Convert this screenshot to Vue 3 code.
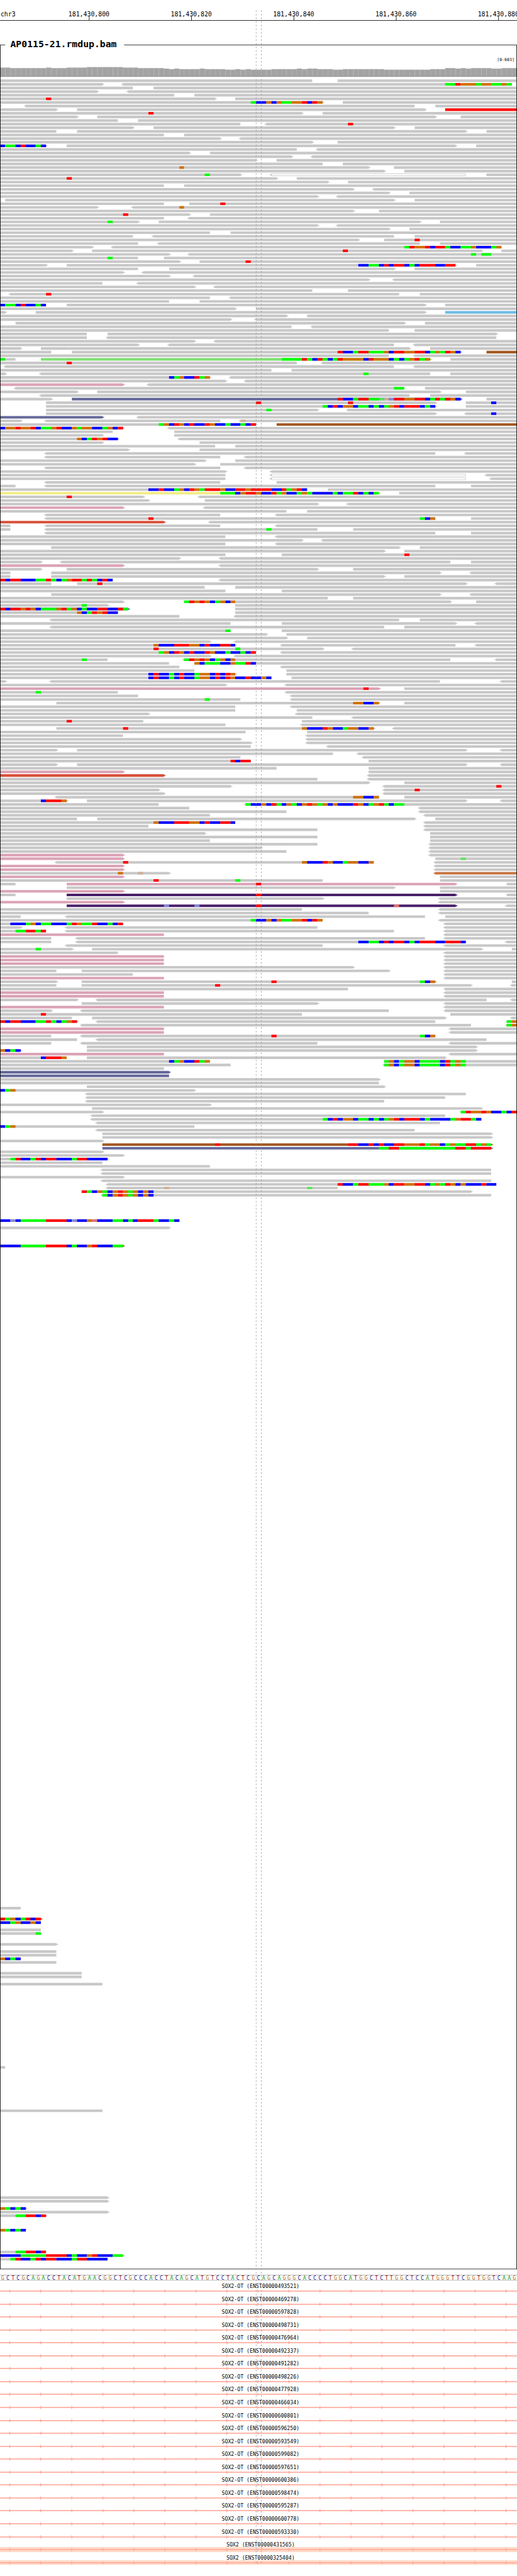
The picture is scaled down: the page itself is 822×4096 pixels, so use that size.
<script setup>
const BASES = 101
const ROW_PITCH = 7
const READ_TOP = 94

const sequence =
  'GCTCGCAGACCTACATGAACGGCTCGCCCACCTACAGCATGTCCTACTCGCAGCAGGGCACCCCTGGCATGGCTCTTGGCTCCATGGGTTCGGTGGTCAAG'

const genes = [
  '493521', '469278', '597828', '498731', '476964', '492337', '491282', '498226',
  '477928', '466034', '600801', '596250', '593549', '599082', '597651', '600386',
  '598474', '595287', '600778', '593330',
].map((id) => ({ label: `SOX2-OT (ENST00000${id})`, band: 0 }))
genes.push({ label: 'SOX2 (ENST00000431565)', band: 10 })
genes.push({ label: 'SOX2 (ENST00000325404)', band: 9 })

const ticks = [
  { base: 17, label: '181,430,800' },
  { base: 37, label: '181,430,820' },
  { base: 57, label: '181,430,840' },
  { base: 77, label: '181,430,860' },
  { base: 97, label: '181,430,880' },
]

// [first base, top of the bar] for each step of the coverage histogram
const coverage = [
  [0, 71], [2, 72], [9, 71], [10, 72], [13, 71], [17, 70], [24, 71], [27, 72], [32, 73],
  [33, 74], [34, 73], [35, 74], [39, 73], [40, 74], [44, 75], [46, 74], [47, 75], [48, 74],
  [49, 75], [53, 74], [58, 73], [59, 74], [60, 73], [62, 74], [65, 75], [67, 74], [75, 75],
  [84, 74], [87, 72], [89, 73], [90, 72], [91, 73], [92, 72], [96, 73], [98, 72],
]

const readColors = {
  '': '#c8c8c8',
  p: '#dba3b5',
  s: '#65689a',
  b: '#a45a24',
  l: '#80e073',
  k: '#6cbce6',
  y: '#f3ec87',
  m: '#d9503a',
  o: '#c87441',
  u: '#49206a',
  r: '#ff0000',
}

const baseColors = {
  A: '#00ff00', C: '#0000ff', G: '#d17105', T: '#ff0000',
  a: '#63e263', c: '#8a8ad8', g: '#cdb299', t: '#e07272',
}

const letterColors = { A: '#109618', C: '#14148c', G: '#b0701c', T: '#a50a0a' }

// One line per row: reads as "start-end" with < or > for the strand tip and an
// optional colour letter in front, then mismatches as "@position" plus bases.
// "#n" jumps to row n, "w" marks a hollow read.
const pileup = `
0-61 66-101
0-20> <24-100 @87AATGGGAGGAAGA
0-26 30-101
0-19> <25-101
0-34 38-101
0-42> 46-101 @9T
0-63> 67-101 @49ACCGCGAAGGTCTG
0-0> <5-81 85-101
0-11> 15-83> r87-101
0-59> 63-101 @29T
0-15> 19-85> 90-101
0-23 27-101
0-47 <52-101 @68T
0-26> 30-77> 81-101
0-11 15-91> 95-101
0-32 36-101
0-43> <47-101
0-61> 66-101
0-9> 13-89> 93-101 @0CAACTCCAC
0-58 <62-101
0-37> 41-101
0-57> <61-101
0-50> 54-101
0-63 67-101
0-72> 77-101 @35G
0-75> 79-101
0-47> w<53-91 95-101 @40A
0-54> 58-101 @13T
0-64> 68-101
0-32 36-101
0-69> <73-101
0-76> 80-101
0-62> <66-101
1-77> 81-101
0-32 37-101 @43T
0-19> <26-101 @35G
0-69> 74-101
0-37> 41-101 @24T
0-32 <37-101
0-27> 31-82> 86-101 @21A
0-62> <66-101
0-76> 80-101
0-41 45-101
0-26 <30-77 81-101
0-70> 75-101 @81T
0-27 <31-82 86-101
0-18> <22-98 @79ATGGTCTTACCAAGCCCAG
0-14> 18-94> 98-101 @67T
0-33> <37-101 @92A @94AA
0-27 32-101 @21A
0-35> 39-101 @48T
0-9> 13-89> 93-101 @70CCAACTCTTCACTTTCCTT
0-27 33-77> 81-101
0-24> <28-101
0-33> <38-101
0-72> <77-101
0-20 <27-101
0-38> <42-101
0-61 68-101
<2-78 82-101 @9T
0-41 <45-101
0-33 39-101
0-9 13-83> 87-101 @0CAACTCCAC
0-46> 50-101
0-1> 7-83> k87-101
0-56> 60-101
0-45> <50-101
3-79> 83-101
0-57 <61-101
0-76 81-101
0-17 21-97>
0-17 <21-97
0-38> <42-101
0-27> <33-77 <81-101
0-4> 8-80> 84-101
0-10 14-90> b95-101 @66TCCATTAAAGCTTGGTTCAGATGC
0-76 <81-101
0-3 l8-84> 88-101 @0A @55AAAATACTACATGGGGCTGGGCACAGTAG
0-58 <63-101 @13T
<1-77 <81-101
0-53 57-101
0-1> <8-84 88-101 @71A
0-41> <45-101 @33CAGCCTAG
0-44> <48-101
p0-24> <29-101
<3-79 83-101 @77AA
0-15> 19-86> 91-101
<8-80 84-101
0-10> s14-90> 95-101 @66TCCATTAAagcTTGGTTCATATGC
9-85> 91-101 @50T @68T @96C
9-85> 91-101 @63ACTCGGCAACACAGTCTTTCAC
9-62> <68-101 @52A
9-85> <91-101 @96C
s0-20> <27-101
0-4> <9-43 <47-101 @47g
0-50> b54-101 @31AGCTGCTCCTGCCACCACT
0-24> <33-101 @0CGGTGGTCAAGTCCGAGGCCAGCT
0-22 34-101
0-20> 34-101
0-23> <35-101 @15GCATGTCC
0-20> 39-101
0-42 46-101
0-25> 39-101
<9-85 <91-101
<9-43 <48-101
0-40> 46-101
0-38> 43-101
0-0> <9-43 <48-101
0-44> <53-101
0-44 w<53-91 <95-101
0-44 w<53-91 <96-101
<9-43 54-101
0-3 <9-85 92-101
0-60 64-101 @29CCTCCAGCTGATTTGCCTTGTTTTCCTAGTC
y0-74> 78-101 @43AAACGTTGCCTAGCCAGACCCCACAATCACA
0-28> <39-101 @13T
0-29> 40-101
0-62> <68-101
p0-24> <40-101
0-56 60-101
<9-43 <54-101
<9-85 92-101 @29T @82ACG
m0-32> <41-101
0-2 <9-43 <54-101
0-2 <9-62 69-101 @52A
<9-85 92-101
0-44 <54-101
0-59> <63-101
0-44 <54-101
10-78> 82-101
0-75> 79-101
0-44 55-101 @79T
0-35> <43-101
0-8> <12-88 92-101
p0-24> <43-101
0-8> 13-62> 69-101
0-2 10-86> <92-101
0-2 10-75> 79-101
0-22 <43-101 @0TCTTCCCAATACAGTTATACTC
0-10 15-91> <97-101 @19T
0-40 46-101
0-44 55-101
10-86> <92-101
0-64 69-101
0-24> 36-88> 93-101 @36ATGTGCAGCG
0-21> 46-101 @16A
s0-25> 46-101 @0TCTTGTGCAAAGTAGCACCTTCCTA
0-23 46-101 @15GCATGTCC
0-35 <46-101
<10-78 82-101
0-45 55-89> <93-101
<10-75 79-101
0-45 55-101 @44A
0-52> 56-101
0-56> 60-101
0-41> <46-101
0-46> <55-89 <93-101 @30GCCCTTTGGCTCCTTC
0-63> <69-101 @30T @46A
0-50 <55-101 @31AGCTGCTCCTGCCACCACT
0-41> <46-101
0-21 <36-88 <97-101 @16A @36ATGTGCAGCG
0-33 38-101 @38GCAAACCGAATC
0-35 <55-101
0-38 56-101
0-46> 56-101 @29CTCCACTCCAGGCTCTG
0-53 57-101 @29CTCCACTCCAGGCTCTGCCTCCGC
0-1> <10-86 <98-101
0-44> <56-101
p0-74> 79-101 @71T
0-23 <56-101 @7A
0-27 <57-101
0-47 <57-101 @40A
11-74> 79-101 @69GGCCG
0-46 <57-101
0-46 58-101
0-29> <58-101
0-61 <69-101
0-28 59-101 @13T
0-44 <59-101
11-73> <77-101 @24T @59GCCCTGCCAGGCCG
0-48 60-101
0-24 <60-101
0-47> <60-101
0-49> <60-101
0-49 <64-101
0-11> 15-91> <98-101
0-65 <70-101
0-47 <71-101
0-49 72-101 @45TCTT
0-11> 15-91> <98-101
0-54 72-101
p0-24> 72-101
m0-32> <72-101
0-62 <72-101
0-72> 79-101
0-45> <75-101 @97T
0-31> <75-101 @81T
0-32> <75-101
<11-74 79-101 @69GGCCG
0-13> 17-91> <98-101 @8CTTTG
0-31 <48-101 @48ACCGCTACGACGTGAGCGCCCTGCAGTACAA
0-37 <82-101
0-56 <82-101
0-41 <83-101
0-15 19-81> 85-101
0-46 <83-101 @30GCCCTTTGGCTCCTTC
0-29 <83-101
0-62 <83-101
0-40> 84-101
0-62 84-101
0-41 84-101
0-62 <84-101
0-51> <84-101
0-56 <84-101
p0-24> <84-101
p0-24> 85-101 @90a
<11-73 <85-101 @24T @59GCCCTGCCAGGCCG
p0-24> <85-101
p0-24> <85-101
0-33> o<85-101 @23G @27g
p0-24> 86-101
0-63 86-101 @30T @46A
0-3 p13-89> 99-101 @50T
13-77> 86-101
p0-24> 86-101
0-3 u13-89> 99-101 @50T
13-63> <86-101
p0-24> <86-101
u13-89> <99-101 @32c @38c @50T @77t
0-59 <86-101
0-72 <86-101
0-4 <13-83 87-101
0-63 <86-101 @49ACCGCGAAGGTCTG
0-23 <87-101 @2CCCAGCAACCCATGAATCCACT
0-4> <13-62 <87-101
0-9 <13-77 <87-101 @3AATTAT
p0-32 <87-101
0-10 <15-83 <87-101
0-10 <15-91 <99-101 @70CCAACTCTTCACTTTCCTTTC
<13-63 <87-101
0-14> 18-94> 100-101 @7A
0-23 <87-101
p0-32 <87-101
p0-32 <87-101
p0-32 <87-101
0-69> <87-101
0-11 16-76> <87-101
0-26 <87-101
p0-32 <87-101
0-11> 16-85> 100-101 @53T @82ACG
0-11 16-92> <100-101 @42T
0-68 <87-101
p0-32 <87-101
p0-32 <87-101
0-15> <19-95 <100-101
16-62> <87-101
p0-32 <87-101
0-10> <16-76 <87-101
0-59 88-101 @8T
0-14 18-87> <100-101
0-15> <19-85 99-101 @0TCTTCCCAATACAGT @99AG
<16-92 <99-101 @99AG
p0-32 <88-101
p0-32 <88-101
0-10 <16-85 @53T @82ACG
0-15 <19-95
0-10 <16-62 <88-101
17-93>
0-4> 17-93> @0GCAC
p0-32 <88-101
0-13 17-87> @8CTTTG
0-41 75-101 @33CAGCCTAG @75AGCAGGCAAAACTAGA
0-45 <75-101 @75AGCAGGCAAAACTAGA
0-32
s0-33>
s0-33
0-74>
0-74
17-75>
0-38> @0CAG
<17-91
<17-87
<17-75
0-41>
18-94>
0-20> 90-101 @90ATGGTGCCACT
<18-87
<18-94 @63ACTCGGCAACACAGTCTTTCACCCCAGTTAC
<19-86
0-38 @0CAG
<19-81
20-96>
20-96>
0-20>
b20-96> @42T @68TTCCTCTCCTTGGGTAGGCAGAATTAGA
s20-96> @74AATTAAAAAAAAAAATTATTTT
0-20>
0-24>
0-21> @2ATCCATCTTCCCATTCCCC
0-20
0-41
<20-96
<20-96
0-24>
<20-96
<21-97 @66TCCATTAAAGCTTGGTTCAGATGCGCCCTCC
<21-66 @32g @60a
16-92> @16TACGACGTGAGCGC
<20-96 @20ACGTGAGCGC
#315 0-35 @0CCcCAAAAATTTTCcCCGtCCCAACACTTTACCAC
#317 0-33>
#322 b0-24> @0CCCCAAAAATTTTCACCGTCCCAA
#505 0-4
#508 o0-8> @0TAGCATCT
#509 0-8 @0CCAGCCGC
#511 0-8
#512 0-8 @7A
#515 0-11>
#517 0-11
#518 0-11
#519 0-4 @0GCAC
#520 0-11
#523 0-16
#524 0-16
#526 0-20
#549 0-1
#561 0-20
#585 0-21>
#586 0-21>
#588 0-5> @0GACAC
#589 0-21>
#590 0-9> @3AATTCT
#594 0-5 @0GACAC
#600 0-9 @3AATTCT
#601 0-24> @0CCCCAAAAATTTTCACCGTCCCAA
#602 0-21 @2ATCCATCTTCCCATTCCCC
`

const baseX = (base) => Math.round((base * 1000) / BASES)

function readPath(x0, x1, y, tipLeft, tipRight) {
  const right = tipRight ? 'v1h2v1h2v1h-2v1h-2v1' : 'v5'
  const left = tipLeft ? 'v-1h-2v-1h-2v-1h2v-1h2v-1' : 'v-5'
  return `M${x0} ${y}H${x1}${right}H${x0}${left}z`
}

function parsePileup(text) {
  const reads = []
  const marks = []
  let row = -1
  for (const line of text.trim().split('\n')) {
    row += 1
    for (const token of line.split(' ')) {
      if (token[0] === '#') {
        row = Number(token.slice(1))
        continue
      }
      const y = READ_TOP + row * ROW_PITCH
      if (token[0] === '@') {
        const [, start, bases] = token.match(/^@(\d+)([A-Za-z]+)$/)
        let from = 0
        for (let i = 1; i <= bases.length; i++) {
          if (bases[i] === bases[from]) continue
          const x = baseX(Number(start) + from)
          marks.push({ x, y, width: baseX(Number(start) + i) - x, fill: baseColors[bases[from]] })
          from = i
        }
        continue
      }
      const [, color, tipLeft, start, end, tipRight] = token.match(/^([a-z]?)(<?)(\d+)-(\d+)(>?)$/)
      const hollow = color === 'w'
      reads.push({
        d: readPath(baseX(Number(start)), baseX(Number(end)), y, tipLeft, tipRight),
        hollow,
        inner: { x: baseX(Number(start)) + 1, y: y + 1, width: baseX(Number(end)) - baseX(Number(start)) - 2 },
        fill: hollow ? readColors[''] : readColors[color],
      })
    }
  }
  return { reads, marks }
}

const { reads, marks } = parsePileup(pileup)

const coverageBars = []
coverage.forEach(([start, top], i) => {
  const end = i + 1 < coverage.length ? coverage[i + 1][0] : BASES
  for (let base = start; base < end; base++) {
    const x = baseX(base)
    coverageBars.push({ x, top, width: baseX(base + 1) - x })
  }
})

const letters = [...sequence].map((letter, i) => ({
  letter,
  x: Math.round(((i + 0.5) * 1000) / BASES),
  fill: letterColors[letter],
}))

const arrowXs = Array.from({ length: 17 }, (_, i) => 18 + i * 60)
</script>

<template>
  <main class="browser">
    <svg class="panel" viewBox="0 0 1000 60">
      <text class="ruler-text" x="1" y="32">chr3</text>
      <g v-for="tick in ticks" :key="tick.base">
        <text class="ruler-text centered" :x="baseX(tick.base) + 4" y="32">{{ tick.label }}</text>
        <rect class="ink" :x="baseX(tick.base) + 4" y="32" width="1" height="7" />
      </g>
      <rect class="ink" x="0" y="39" width="1000" height="1" />
    </svg>

    <svg class="panel" viewBox="0 0 1000 4335">
      <rect
        v-for="bar in coverageBars"
        :key="bar.x"
        class="cover-edge"
        :x="bar.x"
        :y="bar.top"
        :width="bar.width"
        :height="88 - bar.top"
      />
      <rect
        v-for="bar in coverageBars"
        :key="bar.x"
        class="cover"
        :x="bar.x + 1"
        :y="bar.top + 1"
        :width="bar.width - 1"
        :height="87 - bar.top"
      />
      <rect class="cover-base" x="0" y="88" width="1000" height="1" />
      <text class="range-text" x="995" y="58">[0-603]</text>

      <template v-for="(read, i) in reads" :key="i">
        <path :d="read.d" :fill="read.fill" />
        <rect
          v-if="read.hollow"
          class="paper"
          :x="read.inner.x"
          :y="read.inner.y"
          :width="read.inner.width"
          height="3"
        />
      </template>
      <rect
        v-for="(mark, i) in marks"
        :key="i"
        :x="mark.x"
        :y="mark.y"
        :width="mark.width"
        height="5"
        :fill="mark.fill"
      />

      <path class="ink" d="M0 27H10V28H1V4329H999V28H240V27H1000V4330H0z" />
      <text class="title-text" x="20" y="32">AP0115-21.rmdup.bam</text>
    </svg>

    <svg class="panel" viewBox="0 0 1000 20">
      <rect class="rail" x="0" y="5" width="1000" height="1" />
      <rect class="rail" x="0" y="15" width="1000" height="1" />
      <text
        v-for="(item, i) in letters"
        :key="i"
        class="base-text"
        :x="item.x"
        y="14"
        :fill="item.fill"
      >{{ item.letter }}</text>
    </svg>

    <svg v-for="gene in genes" :key="gene.label" class="panel" viewBox="0 0 1000 25">
      <rect v-if="gene.band" class="exon" x="0" y="12" width="1000" :height="gene.band" />
      <text class="gene-text" x="504" y="11">{{ gene.label }}</text>
      <rect class="gene-line" x="0" y="16" width="1000" height="2" />
      <path v-for="x in arrowXs" :key="x" class="gene-line" :d="`M${x} 13l3 4l-3 4z`" />
    </svg>

    <svg class="panel" viewBox="0 0 1000 16"></svg>

    <svg class="guides" viewBox="0 0 1000 4981">
      <path d="M495.5 20V4958M505.5 20V4958" />
    </svg>
  </main>
</template>

<style>
body {
  background: #ffffff;
}
</style>

<style scoped>
.browser {
  position: relative;
  width: 100%;
  overflow: hidden;
  background: #ffffff;
  font-family: 'DejaVu Sans Mono', 'Liberation Mono', monospace;
}

.panel {
  display: block;
  width: 100%;
  height: auto;
}

.guides {
  position: absolute;
  inset: 0;
  width: 100%;
  pointer-events: none;
}

.guides path {
  fill: none;
  stroke: #969696;
  stroke-width: 1px;
  stroke-dasharray: 3 4;
}

.ink {
  fill: #000000;
}

.paper {
  fill: #ffffff;
}

.cover {
  fill: #a3a3a3;
}

.cover-edge {
  fill: #afafaf;
}

.cover-base {
  fill: #777777;
}

.rail {
  fill: #aaaaaa;
}

.exon {
  fill: #ffdbc9;
}

.gene-line {
  fill: #ffa99b;
}

.ruler-text {
  font-size: 12px;
}

.centered,
.base-text,
.gene-text {
  text-anchor: middle;
}

.title-text {
  font-size: 18px;
  font-weight: bold;
}

.range-text {
  font-size: 8px;
  text-anchor: end;
}

.base-text,
.gene-text {
  font-size: 10px;
}
</style>
